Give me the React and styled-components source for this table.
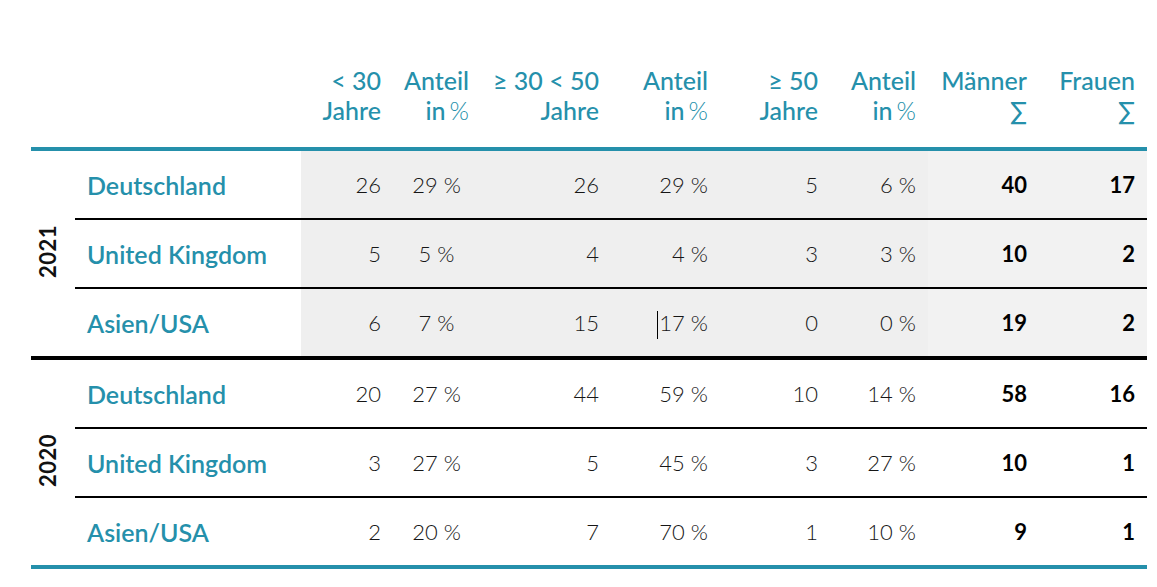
import React from 'react';
import styled, { createGlobalStyle, css } from 'styled-components';

const TEAL = '#2590ab';

const GlobalStyle = createGlobalStyle`
    body {
        margin: 0;
        background: #fff;
        font-family: Lato, "Open Sans", sans-serif;
    }
`;

const columns = [44, 226, 94, 83, 131, 109, 110, 100, 109, 110];

const headers = [
    { top: '< 30', bottom: 'Jahre', pad: 14 },
    { top: 'Anteil', bottom: 'in', pct: true, pad: 9 },
    { top: '≥ 30 < 50', bottom: 'Jahre', pad: 10 },
    { top: 'Anteil', bottom: 'in', pct: true, pad: 10 },
    { top: '≥ 50', bottom: 'Jahre', pad: 10 },
    { top: 'Anteil', bottom: 'in', pct: true, pad: 12 },
    { top: 'Männer', bottom: '∑', pad: 10 },
    { top: 'Frauen', bottom: '∑', pad: 12 },
];

// [count, share, count, share, count, share, men, women]
const groups = [
    {
        year: '2021',
        shaded: true,
        rows: [
            ['Deutschland', [26, 29, 26, 29, 5, 6, 40, 17]],
            ['United Kingdom', [5, 5, 4, 4, 3, 3, 10, 2]],
            ['Asien/USA', [6, 7, 15, 17, 0, 0, 19, 2], true],
        ],
    },
    {
        year: '2020',
        rows: [
            ['Deutschland', [20, 27, 44, 59, 10, 14, 58, 16]],
            ['United Kingdom', [3, 27, 5, 45, 3, 27, 10, 1]],
            ['Asien/USA', [2, 20, 7, 70, 1, 10, 9, 1]],
        ],
    },
];

function App() {
    return (
        <Page>
            <GlobalStyle />
            <Table>
                <colgroup>
                    {columns.map((w, i) => (
                        <col key={i} style={{ width: w }} />
                    ))}
                </colgroup>
                <thead>
                    <tr>
                        <HeadCell />
                        <HeadCell />
                        {headers.map((h, i) => (
                            <HeadCell key={i} $pad={h.pad}>
                                {h.top}
                                <br />
                                {h.bottom}
                                {h.pct && <Pct>%</Pct>}
                            </HeadCell>
                        ))}
                    </tr>
                </thead>
                {groups.map((g, gi) => {
                    const lastGroup = gi === groups.length - 1;
                    return (
                        <tbody key={g.year}>
                            {g.rows.map(([name, vals, caret], ri) => {
                                const edge = ri === g.rows.length - 1 ? (lastGroup ? 'teal' : 'thick') : 'thin';
                                return (
                                    <tr key={name}>
                                        {ri === 0 && (
                                            <YearCell rowSpan={g.rows.length} $edge={lastGroup ? 'teal' : 'thick'}>
                                                <Year>{g.year}</Year>
                                            </YearCell>
                                        )}
                                        <NameCell $edge={edge}>{name}</NameCell>
                                        {vals.map((v, ci) => {
                                            const isPct = ci % 2 === 1 && ci < 6;
                                            const isSum = ci >= 6;
                                            return (
                                                <Cell
                                                    key={ci}
                                                    $edge={edge}
                                                    $shaded={g.shaded}
                                                    $light={g.shaded && ci >= 6}
                                                    $pad={headers[ci].pad}
                                                    $center={ci === 1}
                                                    $bold={isSum}
                                                >
                                                    {caret && ci === 3 && <Caret />}
                                                    {isPct ? `${v} %` : v}
                                                </Cell>
                                            );
                                        })}
                                    </tr>
                                );
                            })}
                        </tbody>
                    );
                })}
            </Table>
        </Page>
    );
}

export default App;

const Page = styled.div`
    padding: 65px 10px 0 31px;
`;

const Table = styled.table`
    width: 1116px;
    table-layout: fixed;
    border-collapse: separate;
    border-spacing: 0;
`;

const HeadCell = styled.th`
    padding: 0 ${(p) => p.$pad || 0}px 22px 0;
    border-bottom: 4px solid ${TEAL};
    vertical-align: bottom;
    text-align: right;
    color: ${TEAL};
    font-size: 25px;
    font-weight: 500;
    line-height: 30px;
    white-space: nowrap;
`;

const Pct = styled.span`
    font-weight: 300;
    margin-left: 4px;
`;

const edgeStyle = (edge) => {
    if (edge === 'teal') return css`border-bottom: 4px solid ${TEAL};`;
    if (edge === 'thick') return css`border-bottom: 4px solid #000;`;
    return css`border-bottom: 2px solid #000;`;
};

const YearCell = styled.td`
    padding: 0 11px 0 0;
    vertical-align: middle;
    text-align: center;
    ${(p) => edgeStyle(p.$edge)}
`;

const Year = styled.span`
    display: inline-block;
    writing-mode: vertical-rl;
    transform: rotate(180deg);
    font-size: 22px;
    font-weight: 700;
    letter-spacing: 0.5px;
    line-height: 24px;
    color: #111;
`;

const NameCell = styled.td`
    height: 67px;
    box-sizing: border-box;
    padding: 19px 0 18px 12px;
    line-height: 30px;
    font-size: 25px;
    font-weight: 600;
    color: ${TEAL};
    white-space: nowrap;
    ${(p) => edgeStyle(p.$edge)}
`;

const Cell = styled.td`
    padding: 19px ${(p) => (p.$center ? 0 : p.$pad)}px 18px 0;
    line-height: 30px;
    font-size: 22px;
    font-weight: ${(p) => (p.$bold ? 700 : 300)};
    color: ${(p) => (p.$bold ? '#000' : '#161616')};
    text-align: ${(p) => (p.$center ? 'center' : 'right')};
    white-space: nowrap;
    background: ${(p) => (p.$shaded ? (p.$light ? '#f2f2f2' : '#efefef') : '#fff')};
    ${(p) => edgeStyle(p.$edge)}
`;

const Caret = styled.span`
    position: relative;
    top: 2px;
    display: inline-block;
    width: 0;
    height: 28px;
    border-left: 1px solid #000;
    margin-right: 1px;
    vertical-align: -6px;
`;
